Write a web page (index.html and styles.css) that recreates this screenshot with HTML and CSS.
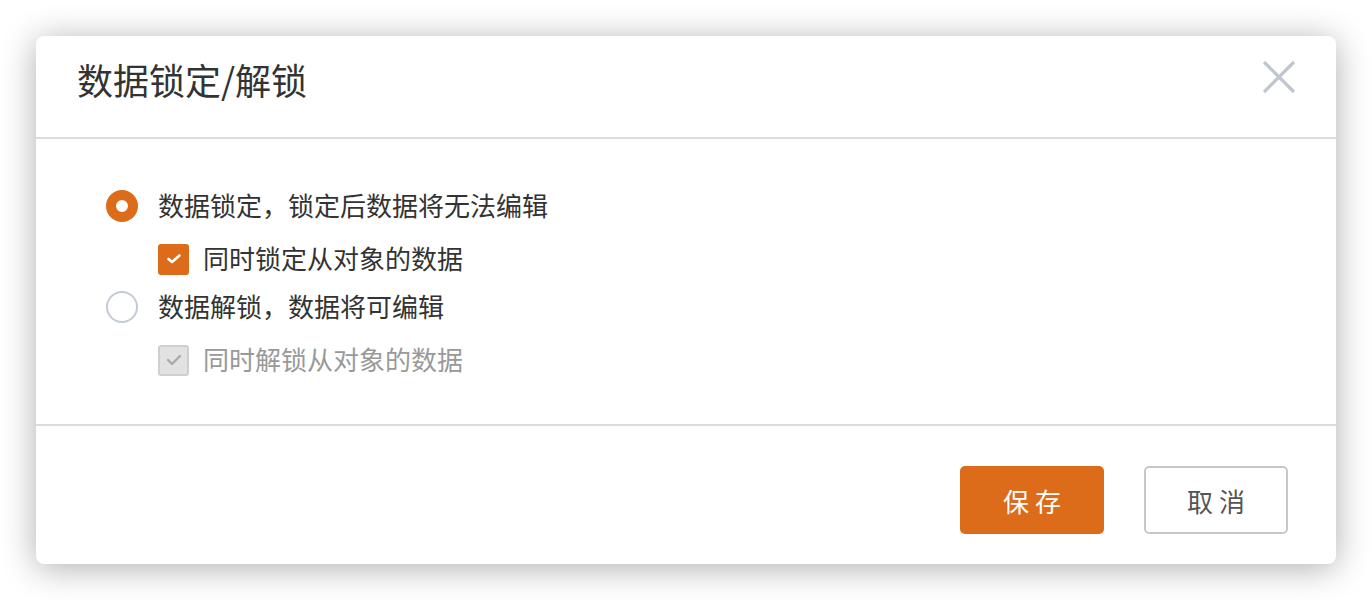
FILE: index.html
```html
<!DOCTYPE html>
<html lang="zh-CN">
<head>
    <meta charset="UTF-8">
    <title>数据锁定/解锁</title>
    <link rel="stylesheet" href="styles.css">
</head>
<body>
    <div class="dialog">
        <div class="dialog-header">
            <h1 class="dialog-title">数据锁定/解锁</h1>
            <button class="close-btn" type="button" aria-label="关闭">
                <svg width="34" height="34" viewBox="0 0 34 34">
                    <path d="M2 2 L32 32 M32 2 L2 32" stroke="#c1c5d0" stroke-width="3.2" fill="none"/>
                </svg>
            </button>
        </div>

        <div class="dialog-body">
            <div class="option radio-row">
                <span class="radio checked"></span>
                <span class="option-text">数据锁定，锁定后数据将无法编辑</span>
            </div>
            <div class="option check-row">
                <span class="checkbox checked">
                    <svg width="16" height="12" viewBox="0 0 16 12">
                        <path d="M2.5 6 L6 9 L13.5 2.5" stroke="#fff" stroke-width="2.6" fill="none" stroke-linecap="round" stroke-linejoin="round"/>
                    </svg>
                </span>
                <span class="option-text">同时锁定从对象的数据</span>
            </div>
            <div class="option radio-row">
                <span class="radio"></span>
                <span class="option-text">数据解锁，数据将可编辑</span>
            </div>
            <div class="option check-row disabled">
                <span class="checkbox">
                    <svg width="16" height="12" viewBox="0 0 16 12">
                        <path d="M2 6 L6 10 L14 2" stroke="#a9a9a9" stroke-width="2.4" fill="none" stroke-linecap="round" stroke-linejoin="round"/>
                    </svg>
                </span>
                <span class="option-text">同时解锁从对象的数据</span>
            </div>
        </div>

        <div class="dialog-footer">
            <button class="btn btn-primary" type="button">保 存</button>
            <button class="btn btn-default" type="button">取 消</button>
        </div>
    </div>
</body>
</html>
```

FILE: styles.css
```css
body {
    margin: 0;
    padding: 36px;
    background-color: #fff;
    font-family: "Noto Sans CJK SC", "Noto Sans", sans-serif;
    color: #333;
}

.dialog {
    width: 1300px;
    background-color: #fff;
    border-radius: 8px;
    box-shadow: 0 4px 34px rgba(0, 0, 0, 0.32);
}

.dialog-header {
    height: 101px;
    display: flex;
    justify-content: space-between;
    padding: 0 40px 0 41px;
    border-bottom: 2px solid #dcdce0;
}

.dialog-title {
    margin: 0;
    font-size: 36px;
    font-weight: 400;
    line-height: 46px;
    padding-top: 20px;
    color: #333;
}

.close-btn {
    border: none;
    background: none;
    padding: 0;
    margin-top: 24px;
    width: 34px;
    height: 34px;
    cursor: pointer;
}

.dialog-body {
    padding: 45px 70px 42px;
}

.option {
    display: flex;
    align-items: center;
    height: 44px;
    font-size: 26px;
}

.option-text {
    margin-top: -3px;
}

.radio-row {
    margin-top: 4px;
}

.radio-row:first-child {
    margin-top: 0;
}

.check-row {
    margin-top: 9px;
    padding-left: 52px;
}

.radio {
    width: 32px;
    height: 32px;
    border-radius: 50%;
    box-sizing: border-box;
    border: 2px solid #c3cad6;
    background-color: #fff;
    margin-right: 20px;
}

.radio.checked {
    border: 10px solid #dc6b1a;
}

.checkbox {
    width: 31px;
    height: 31px;
    box-sizing: border-box;
    border-radius: 3px;
    display: flex;
    align-items: center;
    justify-content: center;
    margin-right: 14px;
}

.checkbox.checked {
    background-color: #dc6b1a;
}

.disabled .checkbox {
    background-color: #e2e2e2;
    border: 2px solid #cfcfcf;
}

.disabled .option-text {
    color: #999;
}

.dialog-footer {
    border-top: 2px solid #dcdce0;
    display: flex;
    justify-content: flex-end;
    gap: 40px;
    padding: 40px 48px 30px;
}

.btn {
    width: 144px;
    height: 68px;
    border-radius: 5px;
    font-family: "Noto Sans CJK SC", sans-serif;
    font-size: 26px;
    cursor: pointer;
}

.btn-primary {
    background-color: #dc6b1a;
    border: none;
    color: #fff;
}

.btn-default {
    background-color: #fff;
    border: 2px solid #c8c8c8;
    color: #555;
}
```
